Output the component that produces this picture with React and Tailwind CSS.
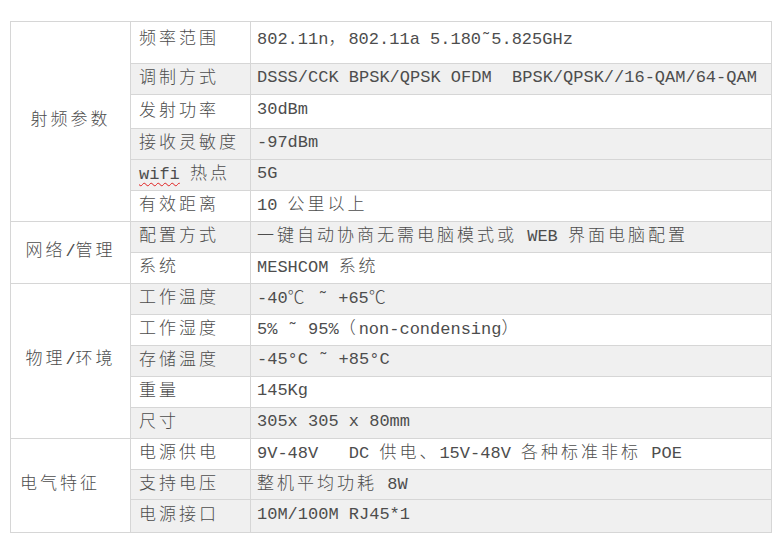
import React from 'react';

const CJK = /([\u2103\u3000-\u303f\u4e00-\u9fff\uff00-\uffef]+)/;

const groups = [
    {
        name: '射频参数',
        rows: [
            { k: '频率范围', v: '802.11n，802.11a 5.180˜5.825GHz', h: 'h-[42px]', pad: 'pb-[8px]' },
            { k: '调制方式', v: 'DSSS/CCK BPSK/QPSK OFDM  BPSK/QPSK//16-QAM/64-QAM', gray: true, h: 'h-[31px]' },
            { k: '发射功率', v: '30dBm', h: 'h-[34px]' },
            { k: '接收灵敏度', v: '-97dBm', gray: true, h: 'h-[31px]' },
            { k: 'wifi', v: '5G', gray: true, wifi: true, h: 'h-[31px]' },
            { k: '有效距离', v: '10 公里以上', h: 'h-[31px]' },
        ],
    },
    {
        name: '网络/管理',
        rows: [
            { k: '配置方式', v: '一键自动协商无需电脑模式或 WEB 界面电脑配置', gray: true, h: 'h-[31px]' },
            { k: '系统', v: 'MESHCOM 系统', h: 'h-[31px]' },
        ],
    },
    {
        name: '物理/环境',
        rows: [
            { k: '工作温度', v: '-40℃ ˜ +65℃', gray: true, h: 'h-[31px]' },
            { k: '工作湿度', v: '5% ˜ 95%（non-condensing）', h: 'h-[31px]' },
            { k: '存储温度', v: '-45°C ˜ +85°C', gray: true, h: 'h-[31px]' },
            { k: '重量', v: '145Kg', h: 'h-[31px]' },
            { k: '尺寸', v: '305x 305 x 80mm', gray: true, h: 'h-[31px]' },
        ],
    },
    {
        name: '电气特征',
        left: true,
        rows: [
            { k: '电源供电', v: '9V-48V   DC 供电、15V-48V 各种标准非标 POE', h: 'h-[31px]' },
            { k: '支持电压', v: '整机平均功耗 8W', gray: true, h: 'h-[30px]' },
            { k: '电源接口', v: '10M/100M RJ45*1', gray: true, h: 'h-[33px]' },
        ],
    },
];

// split latin / cjk so the cjk runs get wider spacing like the original SimSun text
const Txt = ({ children }) =>
    children.split(CJK).map((part, i) =>
        CJK.test(part) ? (
            <span key={i} className="font-['Noto_Sans_CJK_SC'] font-light tracking-[3px]">{part}</span>
        ) : (
            <span key={i}>{part}</span>
        )
    );

const App = () => {
    return (
        <div className="min-h-[552px] bg-white pl-[10px] pt-[21px] text-[17px] leading-[20px] text-[#4d4d4d] font-['Liberation_Mono','Noto_Sans_CJK_SC',monospace]">
            <table className="w-[761px] table-fixed border-collapse">
                <colgroup>
                    <col className="w-[120px]" />
                    <col className="w-[120px]" />
                    <col className="w-[521px]" />
                </colgroup>
                <tbody>
                    {groups.map((g) =>
                        g.rows.map((r, i) => (
                            <tr key={g.name + r.k} className={r.h}>
                                {i === 0 && (
                                    <td
                                        rowSpan={g.rows.length}
                                        className={`border border-[#d6d6d6] bg-white pb-[5px] align-middle whitespace-pre ${g.left ? 'pl-[9px] text-left' : 'text-center'}`}
                                    >
                                        <Txt>{g.name}</Txt>
                                    </td>
                                )}
                                <td className={`border border-[#d6d6d6] pl-[8px] ${r.pad || 'pb-[3px]'} align-middle whitespace-pre ${r.gray ? 'bg-[#f0f0f0]' : 'bg-white'}`}>
                                    {r.wifi ? (
                                        <>
                                            <span className="underline decoration-wavy decoration-[#e02020] decoration-1 underline-offset-[3px]">wifi</span>{' '}
                                            <Txt>热点</Txt>
                                        </>
                                    ) : (
                                        <Txt>{r.k}</Txt>
                                    )}
                                </td>
                                <td className={`border border-[#d6d6d6] pl-[6px] ${r.pad || 'pb-[3px]'} align-middle whitespace-pre ${r.gray ? 'bg-[#f0f0f0]' : 'bg-white'}`}>
                                    <Txt>{r.v}</Txt>
                                </td>
                            </tr>
                        ))
                    )}
                </tbody>
            </table>
        </div>
    );
};

export default App;
